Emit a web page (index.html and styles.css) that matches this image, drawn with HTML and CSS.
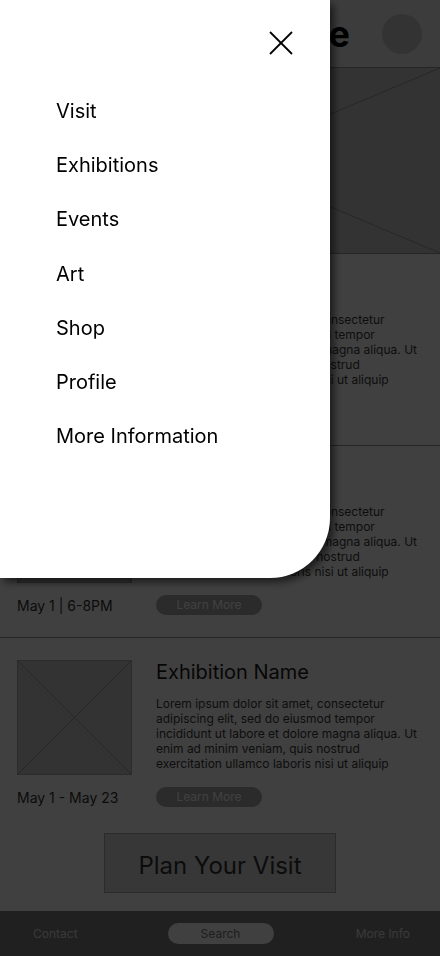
FILE: index.html
```html
<!DOCTYPE html>
<html>

	<head>
		<meta http-equiv="Content-Type" content="text/html; charset=utf-8" />
		<title>Museum</title>
		<link rel="stylesheet" href="styles.css">
	</head>

	<body>
		<div class="page">
			<div class="header">
				<h1 class="logo">Museum Name</h1>
				<div class="avatar"></div>
			</div>
			<div class="hero">
				<svg class="cross" viewBox="0 0 100 100" preserveAspectRatio="none">
					<line x1="0" y1="0" x2="100" y2="100" />
					<line x1="0" y1="100" x2="100" y2="0" />
				</svg>
			</div>

			<div class="card">
				<div class="thumb">
					<svg class="cross" viewBox="0 0 100 100" preserveAspectRatio="none">
						<line x1="0" y1="0" x2="100" y2="100" />
						<line x1="0" y1="100" x2="100" y2="0" />
					</svg>
				</div>
				<div class="info">
					<h2>Event Name</h2>
					<p>Lorem ipsum dolor sit amet, consectetur<br>adipiscing elit, sed do eiusmod tempor<br>incididunt ut labore et dolore magna aliqua. Ut<br>enim ad minim veniam, quis nostrud<br>exercitation ullamco laboris nisi ut aliquip</p>
				</div>
				<div class="date">May 8 | 5-7PM</div>
				<div class="action"><a class="more">Learn More</a></div>
			</div>

			<div class="card">
				<div class="thumb">
					<svg class="cross" viewBox="0 0 100 100" preserveAspectRatio="none">
						<line x1="0" y1="0" x2="100" y2="100" />
						<line x1="0" y1="100" x2="100" y2="0" />
					</svg>
				</div>
				<div class="info">
					<h2>Event Name</h2>
					<p>Lorem ipsum dolor sit amet, consectetur<br>adipiscing elit, sed do eiusmod tempor<br>incididunt ut labore et dolore magna aliqua. Ut<br>enim ad minim veniam, quis nostrud<br>exercitation ullamco laboris nisi ut aliquip</p>
				</div>
				<div class="date">May 1 | 6-8PM</div>
				<div class="action"><a class="more">Learn More</a></div>
			</div>

			<div class="card last">
				<div class="thumb">
					<svg class="cross" viewBox="0 0 100 100" preserveAspectRatio="none">
						<line x1="0" y1="0" x2="100" y2="100" />
						<line x1="0" y1="100" x2="100" y2="0" />
					</svg>
				</div>
				<div class="info">
					<h2>Exhibition Name</h2>
					<p>Lorem ipsum dolor sit amet, consectetur<br>adipiscing elit, sed do eiusmod tempor<br>incididunt ut labore et dolore magna aliqua. Ut<br>enim ad minim veniam, quis nostrud<br>exercitation ullamco laboris nisi ut aliquip</p>
				</div>
				<div class="date">May 1 - May 23</div>
				<div class="action"><a class="more">Learn More</a></div>
			</div>

			<div class="plan-wrap">
				<a class="plan">Plan Your Visit</a>
			</div>

			<div class="tabbar">
				<span class="tab left">Contact</span>
				<span class="tab search">Search</span>
				<span class="tab right">More Info</span>
			</div>
		</div>

		<div class="mask"></div>

		<div class="drawer">
			<div class="drawer-top">
				<svg class="close" width="24" height="24" viewBox="0 0 24 24">
					<line x1="1" y1="1" x2="23" y2="23" />
					<line x1="1" y1="23" x2="23" y2="1" />
				</svg>
			</div>
			<ul class="menu">
				<li>Visit</li>
				<li>Exhibitions</li>
				<li>Events</li>
				<li>Art</li>
				<li>Shop</li>
				<li>Profile</li>
				<li>More Information</li>
			</ul>
		</div>
	</body>

</html>
```

FILE: styles.css
```css
* {
	padding: 0;
	margin: 0;
	list-style: none;
	border: 0;
	box-sizing: border-box;
}

body {
	width: 440px;
	height: 956px;
	overflow: hidden;
	background: #fff;
	font-family: Inter, "Noto Sans", sans-serif;
	color: #333;
}

.page {
	display: flex;
	flex-direction: column;
	height: 956px;
}

.header {
	height: 68px;
	display: flex;
	align-items: center;
	justify-content: flex-end;
	gap: 32px;
	padding: 0 18px 0 0;
	background: #f0f0f0;
	border-bottom: 1px solid #999;
	overflow: hidden;
}

.logo {
	font-size: 36px;
	font-weight: 700;
	color: #000;
	white-space: nowrap;
}

.avatar {
	width: 40px;
	height: 40px;
	border-radius: 50%;
	background: #ccc;
	flex-shrink: 0;
}

.hero {
	height: 186px;
	background: #ccc;
	border-bottom: 1px solid #999;
}

.cross {
	display: block;
	width: 100%;
	height: 100%;
}

.cross line {
	stroke: #999;
	stroke-width: 1;
	vector-effect: non-scaling-stroke;
}

.card {
	height: 192px;
	display: grid;
	grid-template-columns: 115px 1fr;
	grid-template-rows: 115px 20px;
	column-gap: 24px;
	row-gap: 12px;
	padding: 22px 16px 0 17px;
	border-bottom: 1px solid #999;
}

.card.last {
	height: 191px;
	border-bottom: 0;
}

.thumb {
	background: #ccc;
	border: 1px solid #aaa;
}

.info h2 {
	font-size: 20px;
	line-height: 24px;
	font-weight: 400;
	color: #1a1a1a;
	margin-bottom: 12px;
}

.info p {
	font-size: 12px;
	line-height: 15px;
	color: #3a3a3a;
	white-space: nowrap;
}

.date {
	font-size: 14px;
	line-height: 20px;
	color: #333;
	align-self: center;
	padding-top: 2px;
	white-space: nowrap;
}

.action {
	display: flex;
	align-items: center;
}

.more {
	display: block;
	width: 106px;
	height: 20px;
	line-height: 20px;
	border-radius: 10px;
	background: #aaa;
	color: #fff;
	font-size: 12px;
	text-align: center;
}

.plan-wrap {
	display: flex;
	justify-content: center;
	padding: 4px 0 18px;
}

.plan {
	display: block;
	width: 232px;
	height: 60px;
	line-height: 63px;
	background: #d9d9d9;
	border: 1px solid #aaa;
	color: #333;
	font-size: 24px;
	text-align: center;
	overflow: hidden;
}

.tabbar {
	height: 45px;
	display: grid;
	grid-template-columns: 1fr 106px 1fr;
	align-items: center;
	padding: 0 30px 0 31px;
	background: #808080;
	font-size: 12px;
}

.tab {
	color: #e0e0e0;
	white-space: nowrap;
}

.tab.left {
	padding-left: 2px;
}

.tab.search {
	height: 21px;
	line-height: 21px;
	border-radius: 11px;
	background: #fff;
	color: #777;
	text-align: center;
}

.tab.right {
	justify-self: end;
}

.mask {
	position: fixed;
	left: 0;
	top: 0;
	width: 440px;
	height: 956px;
	background: rgba(0, 0, 0, 0.75);
}

.drawer {
	position: fixed;
	left: 0;
	top: 0;
	width: 330px;
	height: 578px;
	background: #fff;
	border-bottom-right-radius: 60px;
	box-shadow: 4px 4px 8px rgba(0, 0, 0, 0.6);
}

.drawer-top {
	display: flex;
	justify-content: flex-end;
	padding: 31px 37px 0 0;
}

.close line {
	stroke: #000;
	stroke-width: 1.8;
}

.menu {
	display: flex;
	flex-direction: column;
	gap: 30.2px;
	padding: 44px 0 0 56px;
}

.menu li {
	font-size: 20px;
	line-height: 24px;
	color: #000;
}
```
